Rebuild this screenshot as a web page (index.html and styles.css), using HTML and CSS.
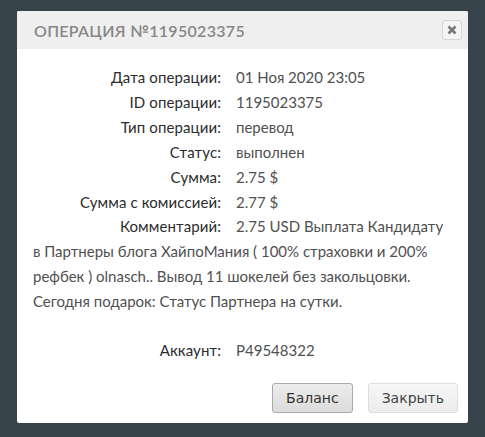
FILE: index.html
```html
<!DOCTYPE html>
<html lang="ru">
<head>
    <meta charset="UTF-8">
    <meta name="viewport" content="width=device-width, initial-scale=1.0">
    <title>Операция №1195023375</title>
    <link rel="stylesheet" href="styles.css">
</head>
<body>
    <div class="dialog">
        <div class="dialog-header">
            <h2>Операция №1195023375</h2>
            <button class="close-btn" aria-label="Закрыть">
                <svg width="10" height="10" viewBox="0 0 10 10">
                    <path d="M1.5 1.5 L8.5 8.5 M8.5 1.5 L1.5 8.5" stroke="#777" stroke-width="2.6" stroke-linecap="butt"/>
                </svg>
            </button>
        </div>

        <div class="dialog-body">
            <div class="row"><span class="label">Дата операции:</span><span class="value">01 Ноя 2020 23:05</span></div>
            <div class="row"><span class="label">ID операции:</span><span class="value">1195023375</span></div>
            <div class="row"><span class="label">Тип операции:</span><span class="value">перевод</span></div>
            <div class="row"><span class="label">Статус:</span><span class="value">выполнен</span></div>
            <div class="row"><span class="label">Сумма:</span><span class="value">2.75 $</span></div>
            <div class="row"><span class="label">Сумма с комиссией:</span><span class="value">2.77 $</span></div>
            <div class="row"><span class="label">Комментарий:</span><span class="value">2.75 USD Выплата Кандидату в Партнеры блога ХайпоМания ( 100% страховки и 200% рефбек ) olnasch.. Вывод 11 шокелей без закольцовки. Сегодня подарок: Статус Партнера на сутки.</span></div>
            <div class="row account"><span class="label">Аккаунт:</span><span class="value">P49548322</span></div>
        </div>

        <div class="dialog-footer">
            <button class="btn btn-primary">Баланс</button>
            <button class="btn">Закрыть</button>
        </div>
    </div>
</body>
</html>
```

FILE: styles.css
```css
body {
    margin: 0;
    padding: 11px 17px;
    background-color: #36434b;
    font-family: 'Lato', sans-serif;
}
.dialog {
    width: 451px;
    height: 412px;
    background-color: white;
    border-radius: 2px;
    display: flex;
    flex-direction: column;
}
.dialog-header {
    height: 38px;
    background-color: #efefef;
    border-radius: 2px 2px 0 0;
    display: flex;
    align-items: center;
    justify-content: space-between;
    padding: 0 6px 0 17px;
}
.dialog-header h2 {
    margin: 0;
    font-size: 16px;
    font-weight: 600;
    letter-spacing: 0.3px;
    text-transform: uppercase;
    color: #878787;
}
.close-btn {
    width: 20px;
    height: 20px;
    padding: 0;
    border: 1px solid #d6d6d6;
    border-radius: 3px;
    background-color: #f4f4f4;
    display: flex;
    align-items: center;
    justify-content: center;
    cursor: pointer;
}
.dialog-body {
    padding: 16px 16px 0 16px;
    font-size: 15px;
    line-height: 24.9px;
    color: #505050;
}
.row .label {
    display: inline-block;
    width: 188px;
    margin-right: 15px;
    text-align: right;
    letter-spacing: 0.1px;
    color: #2c2c2c;
}
.row.account {
    margin-top: 24px;
}
.dialog-footer {
    margin-top: auto;
    padding: 0 10px 10px 0;
    display: flex;
    justify-content: flex-end;
    gap: 15px;
}
.btn {
    font-family: 'DejaVu Sans', Verdana, sans-serif;
    font-size: 14px;
    color: #444;
    height: 30px;
    padding: 0 13px;
    border: 1px solid #ddd;
    border-radius: 3px;
    background: linear-gradient(#f6f6f6, #ececec);
    cursor: pointer;
}
.btn-primary {
    color: #333;
    border-color: #a9a9a9;
    background: linear-gradient(#ececec, #dcdcdc);
}
```
